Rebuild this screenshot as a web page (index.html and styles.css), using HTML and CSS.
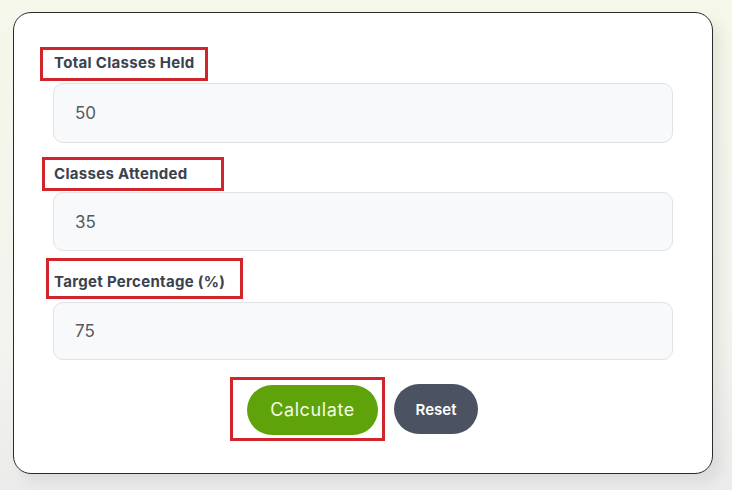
FILE: index.html
```html
<!DOCTYPE html>
<html lang="en">
<head>
    <meta charset="UTF-8">
    <meta name="viewport" content="width=device-width, initial-scale=1.0">
    <title>Attendance Calculator</title>
    <link rel="stylesheet" href="styles.css">
</head>
<body>
    <form class="card">
        <div class="mark mark-one"><label for="held">Total Classes Held</label></div>
        <input type="text" id="held" class="field field-one" value="50">

        <div class="mark mark-two"><label for="attended">Classes Attended</label></div>
        <input type="text" id="attended" class="field field-two" value="35">

        <div class="mark mark-three"><label for="target">Target Percentage (%)</label></div>
        <input type="text" id="target" class="field field-three" value="75">

        <div class="actions">
            <div class="mark mark-btn"><button type="button" class="calc">Calculate</button></div>
            <button type="reset" class="reset">Reset</button>
        </div>
    </form>
</body>
</html>
```

FILE: styles.css
```css
html, body{
  height: 100%;
}
body{
  margin: 0;
  font-family: 'Inter', 'Noto Sans', sans-serif;
  background: linear-gradient(#f5f7ea, #f3f4ee 70%, #ebebeb);
}
.card{
  box-sizing: border-box;
  width: 700px;
  margin: 12px 0 0 13px;
  padding: 0 0 32px;
  background: #fff;
  border: 1px solid #2b2b2b;
  border-radius: 18px;
  box-shadow: 8px 8px 14px rgba(0, 0, 0, 0.07);
}
.mark{
  box-sizing: border-box;
  display: flex;
  align-items: center;
  border: 3px solid #d0262b;
}
.mark label{
  font-size: 15px;
  font-weight: 700;
  color: #3b424e;
  letter-spacing: 0.3px;
  white-space: nowrap;
}
.mark-one{
  width: 168px;
  height: 34px;
  margin: 34px 0 0 26px;
  padding: 0 0 4px 11px;
}
.mark-two{
  width: 182px;
  height: 34px;
  margin: 14px 0 0 28px;
  padding: 0 0 2px 9px;
}
.mark-three{
  width: 197px;
  height: 41px;
  margin: 7px 0 0 32px;
  padding: 6px 0 0 5px;
}
.field{
  box-sizing: border-box;
  display: block;
  width: 620px;
  margin-left: 39px;
  padding: 0 21px;
  font-family: 'Inter', sans-serif;
  font-size: 17px;
  color: #555a60;
  background: #f8f9fb;
  border: 1px solid #e0e2e6;
  border-radius: 10px;
  outline: none;
}
.field-one{
  height: 60px;
  margin-top: 2px;
}
.field-two{
  height: 59px;
  margin-top: 1px;
}
.field-three{
  height: 58px;
  margin-top: 3px;
}
.actions{
  display: flex;
  align-items: center;
  gap: 9px;
  margin-top: 17px;
  padding-left: 216px;
}
.mark-btn{
  width: 155px;
  height: 64px;
  padding: 1px 4px 0 14px;
}
.calc{
  width: 131px;
  height: 50px;
  font-family: 'Inter', sans-serif;
  font-size: 18px;
  letter-spacing: 0.6px;
  color: #f4fbe4;
  background: #5fa30b;
  border: none;
  border-radius: 25px;
  cursor: pointer;
}
.reset{
  width: 84px;
  height: 50px;
  font-family: 'Inter', sans-serif;
  font-size: 15px;
  font-weight: 600;
  color: #fff;
  background: #4b5262;
  border: none;
  border-radius: 25px;
  cursor: pointer;
}
```
